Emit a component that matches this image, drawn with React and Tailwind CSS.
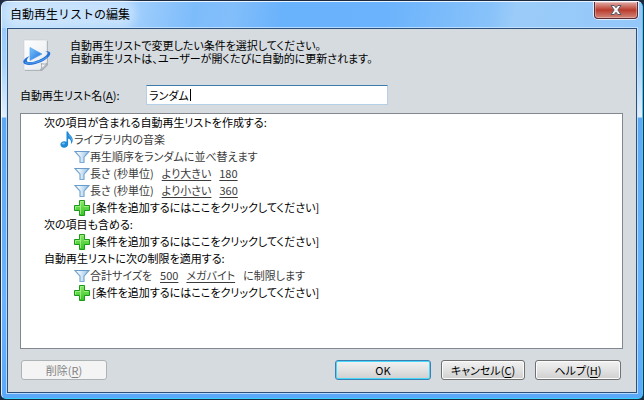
import { useState } from 'react'

const ADD_LABEL = '[条件を追加するにはここをクリックしてください]'

const GROUPS = [
    {
        title: '次の項目が含まれる自動再生リストを作成する:',
        source: 'ライブラリ内の音楽',
        rules: [
            [{ text: '再生順序をランダムに並べ替えます' }],
            [{ text: '長さ (秒単位)' }, { text: 'より大きい', link: true }, { text: '180', link: true }],
            [{ text: '長さ (秒単位)' }, { text: 'より小さい', link: true }, { text: '360', link: true }],
        ],
    },
    { title: '次の項目も含める:', rules: [] },
    {
        title: '自動再生リストに次の制限を適用する:',
        rules: [
            [
                { text: '合計サイズを' },
                { text: '500', link: true },
                { text: 'メガバイト', link: true },
                { text: 'に制限します' },
            ],
        ],
    },
]

function PlaylistIcon() {
    return (
        <svg width="30" height="34" viewBox="0 0 30 34" className="shrink-0" aria-hidden="true">
            <defs>
                <linearGradient id="page" x1="0" y1="0" x2="1" y2="1">
                    <stop offset="0" stopColor="#ffffff" />
                    <stop offset="1" stopColor="#e6eaee" />
                </linearGradient>
                <linearGradient id="play" x1="0" y1="0" x2="1" y2="1">
                    <stop offset="0" stopColor="#7cc4fb" />
                    <stop offset="1" stopColor="#1b6fdc" />
                </linearGradient>
            </defs>
            <path d="M3 3h23v24l-6 6H3z" fill="#7d858b" opacity="0.55" />
            <path d="M2 2h23v24l-6 6H2z" fill="url(#page)" stroke="#c9ced2" strokeWidth="0.6" />
            <path d="M18.500 32c1.500-2 1.500-4 .8-6.500 2 .8 4 .8 5.700 0z" fill="#f8f9fa" stroke="#8f979d" strokeWidth="0.8" />
            <path d="M8 9.500L20 16 8 22.500z" fill="url(#play)" stroke="#4d9df0" strokeWidth="0.6" />
            <path
                d="M7.500 18C2 20.500.8 23 1.500 24.800c.9 2.300 6 2.800 12 1.200C21.500 23.900 28 19 28.300 15.800c.2-2.200-2-3-5.300-2.800 2.800.5 3.400 1.700 2.300 3.300-2 2.900-7 5.500-12 6.900-4.500 1.200-7.800 1.100-8.300 0C4.500 22 5.200 20.500 7.500 18z"
                fill="#2472d8"
            />
            <path d="M3 24.500c4 1.800 15 0 22-5.500" fill="none" stroke="#6fb4f5" strokeWidth="0.7" />
        </svg>
    )
}

function NoteIcon() {
    return (
        <svg width="14" height="17" viewBox="0 0 14 17" className="shrink-0" aria-hidden="true">
            <path
                d="M6.500.500h1.600c.2 3.200 4.600 4.300 4.600 8.500 0 1.600-.6 3-1.700 4 .5-3-.4-4.700-2.900-5.500v5.700c0 2-1.800 3.500-4 3.500S.4 15.600.4 13.600s1.700-3.300 3.900-3.300c.8 0 1.600.2 2.200.5z"
                fill="#2089d6"
            />
            <path d="M8.600 4c1 1.400 2.900 2.600 3.100 5.200" fill="none" stroke="#7cc8f4" strokeWidth="0.7" />
            <ellipse cx="3.400" cy="12.500" rx="1.600" ry="1" fill="#6ec3f3" />
        </svg>
    )
}

function FilterIcon() {
    return (
        <svg width="16" height="14" viewBox="0 0 16 14" className="shrink-0" aria-hidden="true">
            <defs>
                <linearGradient id="funnel" x1="0" y1="0" x2="1" y2="0">
                    <stop offset="0.200" stopColor="#f4fbff" />
                    <stop offset="1" stopColor="#94bfe4" />
                </linearGradient>
            </defs>
            <path
                d="M1 1.500h14L10 7.200v5.300H6V7.200z"
                fill="url(#funnel)"
                stroke="#7ba9d2"
                strokeWidth="1.200"
                strokeLinejoin="round"
            />
            <path d="M.5 1.500h15" stroke="#6a9bca" />
        </svg>
    )
}

function PlusIcon() {
    return (
        <svg width="16" height="16" viewBox="0 0 16 16" className="shrink-0" aria-hidden="true">
            <defs>
                <linearGradient id="plus" x1="0" y1="0" x2="0" y2="1">
                    <stop offset="0" stopColor="#8be86a" />
                    <stop offset="1" stopColor="#35c425" />
                </linearGradient>
            </defs>
            <path
                d="M5.500.5h5v5h5v5h-5v5h-5v-5h-5v-5h5z"
                fill="url(#plus)"
                stroke="#1a9a16"
                strokeLinejoin="round"
            />
            <path d="M6.500 14V1.500h3M1.500 9.500v-3h5M10 6.500h4.500" fill="none" stroke="#a9f08c" strokeWidth="0.8" />
        </svg>
    )
}

function TitleBar() {
    return (
        <header className="flex h-[26px] items-start justify-between rounded-t-[5px] bg-linear-[100deg,#b5d9fb_0%,#a3d0fc_20%,#7dbcfb_30%,#82befa_36%,#69b2fc_44%,#6bb3fc_60%,#88c2fa_76%,#9bccf9_80%,#93c7fa_100%] pl-[8px] pr-[4px]">
            <h1 className="mt-[3px] rounded-full bg-white/35 text-[12px] leading-[18px] shadow-[0_0_8px_6px_rgba(255,255,255,0.35)]">
                自動再生リストの編集
            </h1>
            <button
                type="button"
                aria-label="閉じる"
                className="flex h-[17px] w-[44px] items-center justify-center rounded-b-[4px] border border-t-0 border-[#5b2b35] bg-linear-to-b from-[#dfaaa7] from-0% via-[#b93a2b] via-50% to-[#d0857a] shadow-[0_0_0_1px_rgba(255,255,255,0.7),inset_0_0_0_1px_rgba(255,255,255,0.3)]"
            >
                <svg width="14" height="12" viewBox="0 0 14 12" aria-hidden="true">
                    <path
                        d="M2 1.500h3.200L7 3.700l1.800-2.200H12L8.900 6l3.100 4.500H8.800L7 8.300l-1.800 2.200H2L5.100 6z"
                        fill="#f5f5f5"
                        stroke="#535766"
                    />
                </svg>
            </button>
        </header>
    )
}

function Row({ indent, children }) {
    return <li className={`flex h-[17px] items-center whitespace-pre ${indent}`}>{children}</li>
}

function RuleList() {
    return (
        <ul className="flex-1 border border-[#828790] bg-white">
            {GROUPS.map((group) => (
                <li key={group.title}>
                    <h2 className="h-[17px] pl-[23px]">{group.title}</h2>
                    <ul>
                        {group.source && (
                            <Row indent="pl-[39px] text-[#3c3c3c]">
                                <NoteIcon />
                                {group.source}
                            </Row>
                        )}
                        {group.rules.map((rule, i) => (
                            <Row key={i} indent="gap-[8px] pl-[53px] text-[#3c3c3c]">
                                <span className="flex items-center">
                                    <FilterIcon />
                                    {rule[0].text}
                                </span>
                                {rule.slice(1).map((part) =>
                                    part.link ? (
                                        <a key={part.text} href="#" className="underline underline-offset-2">
                                            {part.text}
                                        </a>
                                    ) : (
                                        <span key={part.text}>{part.text}</span>
                                    )
                                )}
                            </Row>
                        ))}
                        <Row indent="pl-[53px]">
                            <button type="button" className="flex items-center gap-[2px]">
                                <PlusIcon />
                                {ADD_LABEL}
                            </button>
                        </Row>
                    </ul>
                </li>
            ))}
        </ul>
    )
}

function DialogButton({ className, label, accessKey, ...props }) {
    return (
        <button
            type="button"
            className={`h-[20px] rounded-[3px] border text-center leading-[16px] ${className}`}
            {...props}
        >
            {label}
            {accessKey && (
                <>
                    (<u className="underline-offset-2">{accessKey}</u>)
                </>
            )}
        </button>
    )
}

export default function App() {
    const [name, setName] = useState('ランダム')

    return (
        <div className="flex min-h-screen flex-col bg-[#1b2a40]">
            <div className="m-px flex flex-1 flex-col rounded-t-[6px] rounded-b-[5px] border border-white/80 border-r-[#2fd3fb] border-b-[#2fd3fb] bg-linear-[180deg,#8fc6fb_0px,#a4d0fb_60px,#e3effb_116px,#5fa9f4_117px,#6ab4ff_300px,#5aa8fa_100%] bg-origin-border font-['Noto_Sans_CJK_JP',sans-serif] text-[11px] leading-[17px] text-black">
                <TitleBar />
                <main className="mx-[5px] mb-[5px] flex flex-1 flex-col border border-[#2d4f7c] bg-[#d6dbdf] pr-[13px] pb-[12px] pl-[12px] shadow-[0_0_0_1px_rgba(200,230,255,0.8)] [font-feature-settings:'palt']">
                    <div className="flex gap-[18px] pt-[9px] pl-[2px]">
                        <PlaylistIcon />
                        <p className="pt-px leading-[13px]">
                            自動再生リストで変更したい条件を選択してください。
                            <br />
                            自動再生リストは、ユーザーが開くたびに自動的に更新されます。
                        </p>
                    </div>

                    <div className="flex items-center pt-[13px] pb-[8px]">
                        <label htmlFor="playlist-name" className="w-[126px]">
                            自動再生リスト名(<u className="underline-offset-2">A</u>):
                        </label>
                        <div className="relative flex">
                            <input
                                id="playlist-name"
                                type="text"
                                value={name}
                                onChange={(e) => setName(e.target.value)}
                                className="h-[20px] w-[242px] border border-[#b5cfe7] border-t-[#3d7bad] bg-white px-[2px] caret-transparent outline-none"
                            />
                            <span className="absolute top-[4px] left-[44px] h-[12px] w-px bg-black" />
                        </div>
                    </div>

                    <RuleList />

                    <div className="flex items-center gap-[10px] pt-[11px] pr-[2px] pl-px">
                        <DialogButton
                            label="削除"
                            accessKey="R"
                            disabled
                            className="mr-auto w-[86px] border-[#adb2b5] bg-[#f4f4f4] text-[#838383]"
                        />
                        <DialogButton
                            label="OK"
                            className="w-[96px] border-[#3c7fb1] bg-linear-to-b from-[#f2f2f2] from-0% via-[#e2e2e2] via-50% to-[#cfcfcf] shadow-[inset_0_0_0_1px_#48d8fb]"
                        />
                        <DialogButton
                            label="キャンセル"
                            accessKey="C"
                            className="w-[84px] border-[#707070] bg-linear-to-b from-[#f2f2f2] from-0% via-[#e2e2e2] via-50% to-[#cfcfcf] shadow-[inset_0_0_0_1px_#fcfcfc]"
                        />
                        <DialogButton
                            label="ヘルプ"
                            accessKey="H"
                            className="w-[86px] border-[#707070] bg-linear-to-b from-[#f2f2f2] from-0% via-[#e2e2e2] via-50% to-[#cfcfcf] shadow-[inset_0_0_0_1px_#fcfcfc]"
                        />
                    </div>
                </main>
            </div>
        </div>
    )
}
